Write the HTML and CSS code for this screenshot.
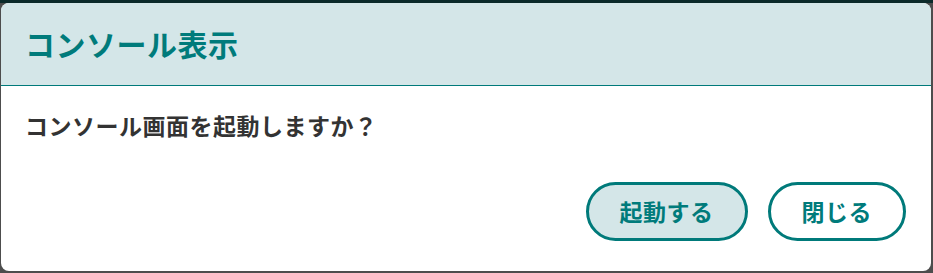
FILE: index.html
```html
<!DOCTYPE html>
<html lang="ja">
<head>
<meta charset="utf-8">
<title>コンソール表示</title>
<link rel="stylesheet" href="styles.css">
</head>
<body>
<div class="overlay">
  <div class="dialog">
    <div class="dialog-header">
      <h1 class="dialog-title">コンソール表示</h1>
    </div>
    <div class="dialog-body">
      <p class="dialog-message">コンソール画面を起動しますか？</p>
      <div class="dialog-actions">
        <button class="btn btn-primary">起動する</button>
        <button class="btn btn-secondary">閉じる</button>
      </div>
    </div>
  </div>
</div>
</body>
</html>
```

FILE: styles.css
```css
html, body {
  margin: 0;
  padding: 0;
}
body {
  width: 933px;
  height: 273px;
  overflow: hidden;
  background: linear-gradient(#0b2a2a 0, #0b2a2a 3px, #4d4d4d 3px);
  font-family: "Noto Sans CJK JP", "Noto Sans", sans-serif;
}
.overlay {
  padding: 3px 2px 2px 1px;
}
.dialog {
  width: 930px;
  height: 268px;
  background: #ffffff;
  border-radius: 8px;
  overflow: hidden;
  display: flex;
  flex-direction: column;
}
.dialog-header {
  height: 82px;
  background: #d4e6e8;
  border-bottom: 1px solid #007a7a;
  display: flex;
  align-items: center;
  padding-left: 24px;
}
.dialog-title {
  margin: 0 0 3px 0;
  font-size: 30px;
  font-weight: 700;
  color: #007b7b;
  line-height: 1;
  letter-spacing: 0.5px;
}
.dialog-body {
  padding: 23px 25px 0 24px;
}
.dialog-message {
  margin: 0;
  font-size: 23px;
  font-weight: 700;
  color: #333333;
  line-height: 33px;
  letter-spacing: 0.5px;
}
.dialog-actions {
  display: flex;
  justify-content: flex-end;
  gap: 20px;
  margin-top: 40px;
}
.btn {
  height: 59px;
  padding: 0 31px;
  border: 3px solid #007a7a;
  border-radius: 30px;
  font-family: inherit;
  font-size: 23px;
  font-weight: 700;
  color: #007b7b;
  cursor: pointer;
  line-height: 1;
  letter-spacing: 0.5px;
}
.btn-primary {
  background: #d4e6e8;
}
.btn-secondary {
  background: #ffffff;
}
```
